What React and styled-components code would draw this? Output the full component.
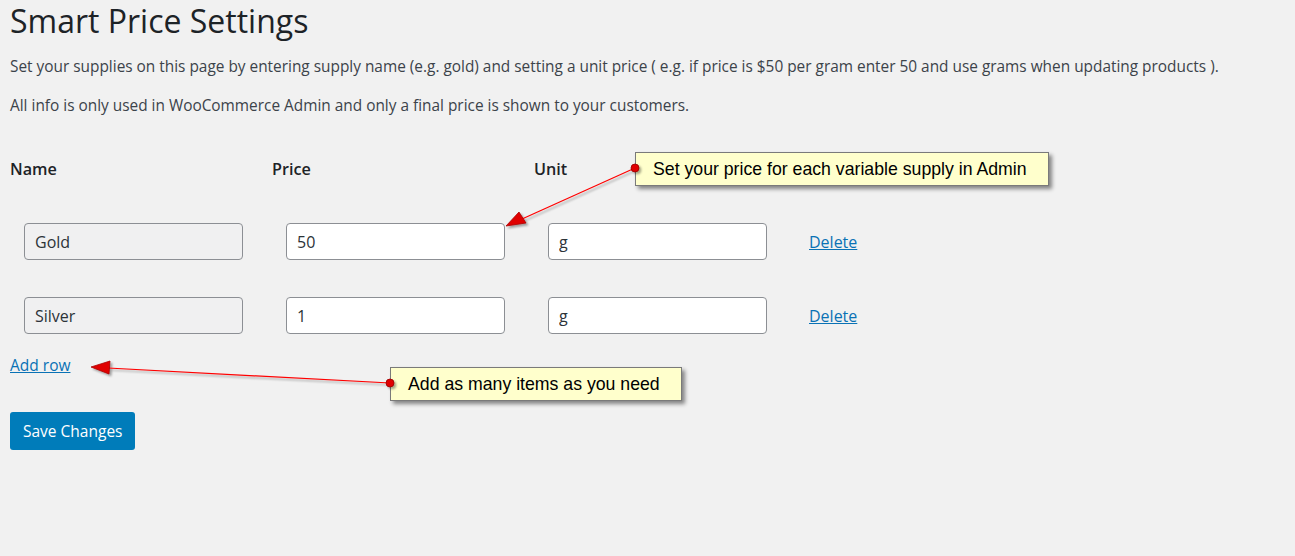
import React from "react";
import styled, { createGlobalStyle } from "styled-components";

const GlobalStyle = createGlobalStyle`
  html, body {
    margin: 0;
    padding: 0;
    background: #f1f1f1;
  }
  body {
    font-family: "Open Sans", "Noto Sans", sans-serif;
    color: #3c434a;
  }
`;

const supplies = [
  { name: "Gold", price: "50", unit: "g" },
  { name: "Silver", price: "1", unit: "g" },
];

export default function App() {
  return (
    <>
      <GlobalStyle />
      <Page>
        <Title>Smart Price Settings</Title>
        <Intro>
          Set your supplies on this page by entering supply name (e.g. gold) and
          setting a unit price ( e.g. if price is $50 per gram enter 50 and use
          grams when updating products ).
        </Intro>
        <Intro>
          All info is only used in WooCommerce Admin and only a final price is
          shown to your customers.
        </Intro>

        <Table>
          <HeadCell>Name</HeadCell>
          <HeadCell>Price</HeadCell>
          <HeadCell>Unit</HeadCell>
          <HeadCell />
          {supplies.map((s) => (
            <Row key={s.name}>
              <Cell>
                <Field readOnly $locked defaultValue={s.name} />
              </Cell>
              <Cell>
                <Field defaultValue={s.price} />
              </Cell>
              <Cell>
                <Field defaultValue={s.unit} />
              </Cell>
              <Cell>
                <Link href="#">Delete</Link>
              </Cell>
            </Row>
          ))}
        </Table>

        <AddRow href="#">Add row</AddRow>
        <SaveButton>Save Changes</SaveButton>

        <Callout $top={152} $left={635}>
          Set your price for each variable supply in Admin
        </Callout>
        <Callout $top={367} $left={390}>
          Add as many items as you need
        </Callout>
        <Arrows width="1295" height="556">
          <defs>
            <filter id="sh" x="-20%" y="-50%" width="140%" height="200%">
              <feDropShadow dx="2" dy="2" stdDeviation="1.2" floodColor="#000" floodOpacity="0.35" />
            </filter>
          </defs>
          <g filter="url(#sh)">
            <line x1="635" y1="168" x2="522" y2="219" stroke="#f00" strokeWidth="1.2" />
            <polygon points="506,226 519,212 526,223" fill="#e00000" stroke="#a00" strokeWidth="0.8" />
            <circle cx="635" cy="168" r="4" fill="#e00000" stroke="#900" strokeWidth="0.8" />
          </g>
          <g filter="url(#sh)">
            <line x1="390" y1="383" x2="108" y2="368" stroke="#f00" strokeWidth="1.2" />
            <polygon points="91,367 110,361 109,374" fill="#e00000" stroke="#a00" strokeWidth="0.8" />
            <circle cx="390" cy="383" r="4" fill="#e00000" stroke="#900" strokeWidth="0.8" />
          </g>
        </Arrows>
      </Page>
    </>
  );
}

const Page = styled.div`
  position: relative;
  width: 1295px;
  height: 556px;
  padding: 0 10px;
  box-sizing: border-box;
  overflow: hidden;
`;

const Title = styled.h1`
  margin: 0;
  padding: 2px 0 0;
  font-size: 32px;
  font-weight: 400;
  line-height: 38px;
  color: #1d2327;
`;

const Intro = styled.p`
  margin: 14px 0 0;
  font-size: 15.4px;
  line-height: 25px;
  color: #3c434a;
  & + & {
    margin-top: 14px;
  }
`;

const Table = styled.div`
  margin-top: 39px;
  display: grid;
  grid-template-columns: 262px 262px 262px auto;
`;

const HeadCell = styled.div`
  font-size: 16.2px;
  font-weight: 600;
  line-height: 24px;
  color: #1d2327;
  padding-bottom: 42px;
`;

const Row = styled.div`
  display: contents;
`;

const Cell = styled.div`
  display: flex;
  align-items: center;
  padding: 0 0 37px 14px;
`;

const Field = styled.input`
  box-sizing: border-box;
  width: 219px;
  height: 37px;
  padding: 0 10px;
  border: 1px solid #8c8f94;
  border-radius: 4px;
  background: ${(p) => (p.$locked ? "#f0f0f1" : "#fff")};
  font-family: inherit;
  font-size: 16px;
  color: #2c3338;
  outline: none;
`;

const Link = styled.a`
  margin-left: -1px;
  font-size: 16px;
  color: #0a72b5;
  text-decoration: underline;
`;

const AddRow = styled.a`
  display: block;
  margin-top: -16px;
  font-size: 15.5px;
  line-height: 20px;
  color: #0a72b5;
  text-decoration: underline;
  width: max-content;
`;

const SaveButton = styled.button`
  display: block;
  margin-top: 37px;
  height: 38px;
  padding: 0 13px;
  border: 0;
  border-radius: 3px;
  background: #007cba;
  color: #fff;
  font-family: inherit;
  font-size: 15.5px;
  cursor: pointer;
`;

const Callout = styled.div`
  position: absolute;
  top: ${(p) => p.$top}px;
  left: ${(p) => p.$left}px;
  height: 34px;
  box-sizing: border-box;
  padding: 0 21px 0 17px;
  display: flex;
  align-items: center;
  background: #ffffcc;
  border: 1px solid #7a7a7a;
  box-shadow: 3px 3px 4px rgba(0, 0, 0, 0.45);
  font-family: "Liberation Sans", Arial, sans-serif;
  font-size: 17.7px;
  color: #000;
  white-space: nowrap;
`;

const Arrows = styled.svg`
  position: absolute;
  top: 0;
  left: 0;
  pointer-events: none;
`;
